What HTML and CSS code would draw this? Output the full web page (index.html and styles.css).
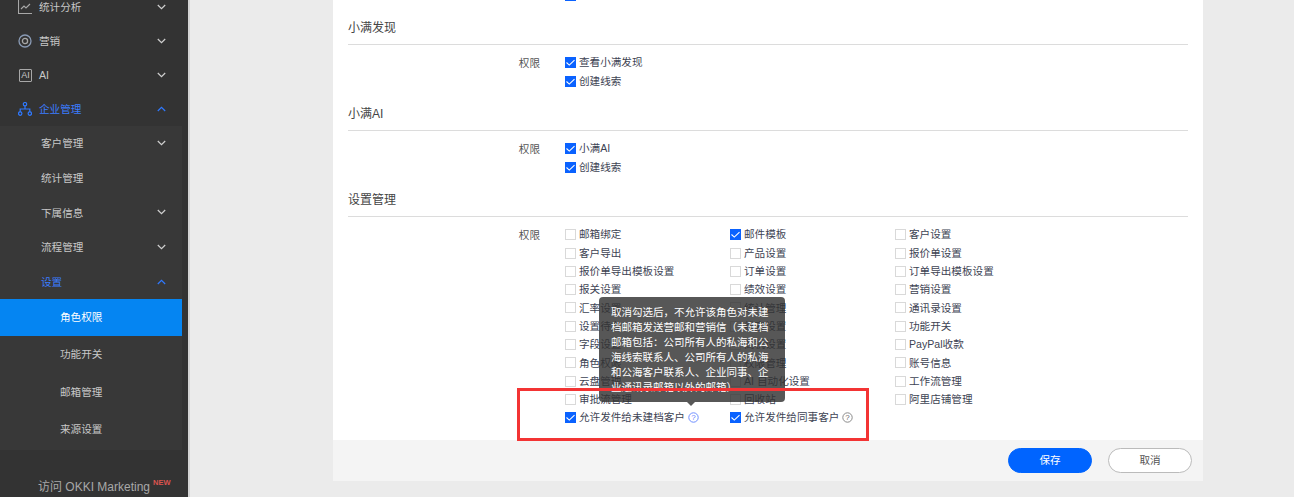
FILE: index.html
```html
<!DOCTYPE html>
<html lang="zh-CN">
<head>
<meta charset="utf-8">
<title>角色权限</title>
<link rel="stylesheet" href="styles.css">
</head>
<body>
<aside class="sidebar">
  <nav class="nav">
    <div class="item"><svg class="icon" viewBox="0 0 14 14"><path d="M.5 0v13.5H14M3 9l3-3 2 2 4-4" fill="none" stroke="#a8a8a8" stroke-width="1.1"/></svg><span class="grow">统计分析</span><svg class="chev" viewBox="0 0 9 6"><path d="M.8 1l3.7 3.7L8.2 1" fill="none" stroke="#d0d0d0" stroke-width="1.2"/></svg></div>
    <div class="item"><svg class="icon" viewBox="0 0 14 14"><circle cx="7" cy="7" r="6" fill="none" stroke="#8a9bb5" stroke-width="1.3"/><circle cx="7" cy="7" r="2.6" fill="none" stroke="#a8a8a8" stroke-width="1.3"/></svg><span class="grow">营销</span><svg class="chev" viewBox="0 0 9 6"><path d="M.8 1l3.7 3.7L8.2 1" fill="none" stroke="#d0d0d0" stroke-width="1.2"/></svg></div>
    <div class="item"><span class="ai-icon">AI</span><span class="grow">AI</span><svg class="chev" viewBox="0 0 9 6"><path d="M.8 1l3.7 3.7L8.2 1" fill="none" stroke="#d0d0d0" stroke-width="1.2"/></svg></div>
    <div class="item on"><svg class="icon" viewBox="0 0 14 14"><g fill="none" stroke="#2f79ff" stroke-width="1.2"><circle cx="7" cy="2.2" r="1.7"/><circle cx="2.2" cy="11.6" r="1.7"/><circle cx="11.8" cy="11.6" r="1.7"/><path d="M7 4v3M2.2 9.9V7h9.6v2.9"/></g></svg><span class="grow">企业管理</span><svg class="chev" viewBox="0 0 9 6"><path d="M.8 5l3.7-3.7L8.2 5" fill="none" stroke="#2f79ff" stroke-width="1.2"/></svg></div>
    <div class="sub">
      <div class="sub-item"><span class="grow">客户管理</span><svg class="chev" viewBox="0 0 9 6"><path d="M.8 1l3.7 3.7L8.2 1" fill="none" stroke="#d0d0d0" stroke-width="1.2"/></svg></div>
      <div class="sub-item"><span class="grow">统计管理</span></div>
      <div class="sub-item"><span class="grow">下属信息</span><svg class="chev" viewBox="0 0 9 6"><path d="M.8 1l3.7 3.7L8.2 1" fill="none" stroke="#d0d0d0" stroke-width="1.2"/></svg></div>
      <div class="sub-item"><span class="grow">流程管理</span><svg class="chev" viewBox="0 0 9 6"><path d="M.8 1l3.7 3.7L8.2 1" fill="none" stroke="#d0d0d0" stroke-width="1.2"/></svg></div>
      <div class="sub-item on"><span class="grow">设置</span><svg class="chev" viewBox="0 0 9 6"><path d="M.8 5l3.7-3.7L8.2 5" fill="none" stroke="#2f79ff" stroke-width="1.2"/></svg></div>
      <div class="leaf active">角色权限</div>
      <div class="leaf">功能开关</div>
      <div class="leaf">邮箱管理</div>
      <div class="leaf">来源设置</div>
    </div>
  </nav>
  <div class="visit"><span>访问 OKKI Marketing</span><sup class="new">NEW</sup></div>
</aside>

<main class="main">
  <section class="panel">
    <div class="body">
      <div class="scrolled">
        <div class="grid tail">
          <label class="check"><i class="box on"></i>创建线索</label>
        </div>
        <h3 class="head">小满发现</h3>
        <div class="perm">
          <div class="perm-label">权限</div>
          <div class="grid">
            <label class="check"><i class="box on"></i>查看小满发现</label>
            <label class="check wrap"><i class="box on"></i>创建线索</label>
          </div>
        </div>
        <h3 class="head">小满AI</h3>
        <div class="perm">
          <div class="perm-label">权限</div>
          <div class="grid">
            <label class="check"><i class="box on"></i>小满AI</label>
            <label class="check wrap"><i class="box on"></i>创建线索</label>
          </div>
        </div>
        <h3 class="head">设置管理</h3>
        <div class="perm">
          <div class="perm-label">权限</div>
          <div class="grid">
            <label class="check"><i class="box"></i>邮箱绑定</label>
            <label class="check"><i class="box on"></i>邮件模板</label>
            <label class="check"><i class="box"></i>客户设置</label>
            <label class="check"><i class="box"></i>客户导出</label>
            <label class="check"><i class="box"></i>产品设置</label>
            <label class="check"><i class="box"></i>报价单设置</label>
            <label class="check"><i class="box"></i>报价单导出模板设置</label>
            <label class="check"><i class="box"></i>订单设置</label>
            <label class="check"><i class="box"></i>订单导出模板设置</label>
            <label class="check"><i class="box"></i>报关设置</label>
            <label class="check"><i class="box"></i>绩效设置</label>
            <label class="check"><i class="box"></i>营销设置</label>
            <label class="check"><i class="box"></i>汇率设置</label>
            <label class="check"><i class="box"></i>统计管理</label>
            <label class="check"><i class="box"></i>通讯录设置</label>
            <label class="check"><i class="box"></i>设置待办</label>
            <label class="check"><i class="box"></i>线索设置</label>
            <label class="check"><i class="box"></i>功能开关</label>
            <label class="check"><i class="box"></i>字段设置</label>
            <label class="check"><i class="box"></i>商机设置</label>
            <label class="check"><i class="box"></i>PayPal收款</label>
            <label class="check"><i class="box"></i>角色权限</label>
            <label class="check"><i class="box"></i>权限管理</label>
            <label class="check"><i class="box"></i>账号信息</label>
            <label class="check"><i class="box"></i>云盘管理</label>
            <label class="check"><i class="box"></i>AI 自动化设置</label>
            <label class="check"><i class="box"></i>工作流管理</label>
            <label class="check"><i class="box"></i>审批流管理</label>
            <label class="check"><i class="box"></i>回收站</label>
            <label class="check"><i class="box"></i>阿里店铺管理</label>
            <label class="check"><i class="box on"></i>允许发件给未建档客户<svg class="help" viewBox="0 0 11 11"><circle cx="5.5" cy="5.5" r="4.7" fill="none" stroke="#6d8dff"/><text x="5.5" y="8.2" text-anchor="middle" class="help-t blue">?</text></svg></label>
            <label class="check"><i class="box on"></i>允许发件给同事客户<svg class="help" viewBox="0 0 11 11"><circle cx="5.5" cy="5.5" r="4.7" fill="none" stroke="#8a8a8a"/><text x="5.5" y="8.2" text-anchor="middle" class="help-t">?</text></svg></label>
          </div>
        </div>
      </div>
    </div>
    <footer class="foot">
      <button class="btn primary">保存</button>
      <button class="btn">取消</button>
    </footer>
  </section>
</main>

<div class="tip">
  <div class="tip-text">取消勾选后，不允许该角色对未建<br>档邮箱发送营邮和营销信（未建档<br>邮箱包括：公司所有人的私海和公<br>海线索联系人、公司所有人的私海<br>和公海客户联系人、企业同事、企<br>业通讯录邮箱以外的邮箱）</div>
</div>
<div class="mark"></div>
</body>
</html>
```
FILE: styles.css
```css
* { box-sizing: border-box; }
html, body { height: 100%; }
body {
  margin: 0;
  height: 497px;
  overflow: hidden;
  display: flex;
  background: #ebebeb;
  color: #3a3a3a;
  font: 10.6px/1.2 "Liberation Sans", "Noto Sans CJK SC", sans-serif;
}

/* sidebar */
.sidebar {
  width: 190px;
  flex: none;
  background: #333;
  border-right: 2px solid #d4d4d4;
  color: #c8c8c8;
  display: flex;
  flex-direction: column;
  overflow: hidden;
}
.nav { margin-top: -10px; width: 182px; }
.item, .sub-item {
  display: flex;
  align-items: center;
  height: 34px;
  padding-right: 16px;
}
.item { padding-left: 19px; gap: 7px; }
.sub-item { padding-left: 41px; height: 34.6px; }
.grow { flex: 1; padding-top: 1px; }
.on > .grow { color: #3b7dff; }
.icon { width: 14px; height: 14px; flex: none; margin-left: -1px; }
.ai-icon {
  width: 13px;
  height: 13px;
  flex: none;
  border: 1px solid #a8a8a8;
  border-radius: 1px;
  font-size: 9px;
  line-height: 11px;
  text-align: center;
}
.chev { width: 9px; height: 6px; flex: none; }
.sub { background: #383838; padding-bottom: 1.5px; }
.leaf {
  height: 37.5px;
  line-height: 37.5px;
  padding-left: 60px;
}
.leaf.active { background: #0585f2; color: #fff; }
.visit {
  margin-top: 28px;
  padding-left: 38px;
  color: #a8a8a8;
  font-size: 12px;
  white-space: nowrap;
  line-height: 18px;
}
.new {
  color: #d9534f;
  font-size: 7.5px;
  font-weight: 700;
  margin-left: 3px;
  vertical-align: 6px;
  line-height: 0;
}

/* main */
.main { flex: 1; padding-left: 143px; }
.panel {
  width: 870px;
  height: 481px;
  background: #fff;
  display: flex;
  flex-direction: column;
}
.body { height: 440px; overflow: hidden; padding: 0 15px; }
.scrolled { margin-top: -14px; }
.tail { padding-left: 217px; margin-bottom: 6.4px; height: 18.3px; }
.head {
  margin: 0;
  height: 34px;
  padding-top: 9px;
  line-height: 16px;
  font-size: 12px;
  font-weight: 400;
  border-bottom: 1px solid #dcdcdc;
  color: #444;
}
.perm { display: flex; padding-top: 9px; margin-bottom: 6.4px; }
.perm-label { width: 192px; text-align: right; line-height: 18.3px; flex: none; color: #555; }
.perm-label { margin-right: 25px; }
.grid {
  display: grid;
  grid-template-columns: repeat(3, 165px);
  grid-auto-rows: 18.3px;
}
.check {
  display: flex;
  align-items: center;
  white-space: nowrap;
  color: #3d4353;
}
.wrap { grid-column: 1; }
.box {
  width: 11px;
  height: 11px;
  flex: none;
  margin-right: 3px;
  border: 1px solid #d9d9d9;
  background: #fff;
}
.box.on {
  border-color: #0a62ff;
  background: #0a62ff url("data:image/svg+xml,%3Csvg xmlns='http://www.w3.org/2000/svg' viewBox='0 0 11 11'%3E%3Cpath d='M1.5 5.5l2.8 2.6 5.2-5' fill='none' stroke='%23fff' stroke-width='1.1'/%3E%3C/svg%3E") center / 11px 11px no-repeat;
}
.help { width: 11px; height: 11px; flex: none; margin-left: 3px; }
.help-t { font-size: 8px; fill: #666; }
.help-t.blue { fill: #5f7fff; }

/* footer */
.foot {
  flex: 1;
  background: #f4f4f4;
  display: flex;
  justify-content: flex-end;
  gap: 16px;
  padding: 8px 11px 0 0;
}
.btn {
  width: 84px;
  height: 25px;
  border: 1px solid #bbb;
  border-radius: 13px;
  background: #fff;
  color: #555;
  font: inherit;
  padding: 0;
}
.btn.primary { background: #0064ff; border-color: #0064ff; color: #fff; }

/* overlays */
.tip {
  position: absolute;
  left: 599px;
  top: 297px;
  width: 186px;
  height: 105px;
  background: rgba(50, 50, 50, .82);
  border-radius: 4px;
  padding: 8px 12px 0;
  color: #fff;
  font-size: 10.5px;
  line-height: 15px;
}
.tip::after {
  content: "";
  position: absolute;
  left: 88px;
  bottom: -4px;
  border: 4px solid transparent;
  border-bottom: 0;
  border-top-color: #585858;
}
.tip-text { height: 87px; overflow: hidden; white-space: nowrap; }
.mark {
  position: absolute;
  left: 517px;
  top: 388px;
  width: 352px;
  height: 53px;
  border: 3px solid #f33434;
}
```
